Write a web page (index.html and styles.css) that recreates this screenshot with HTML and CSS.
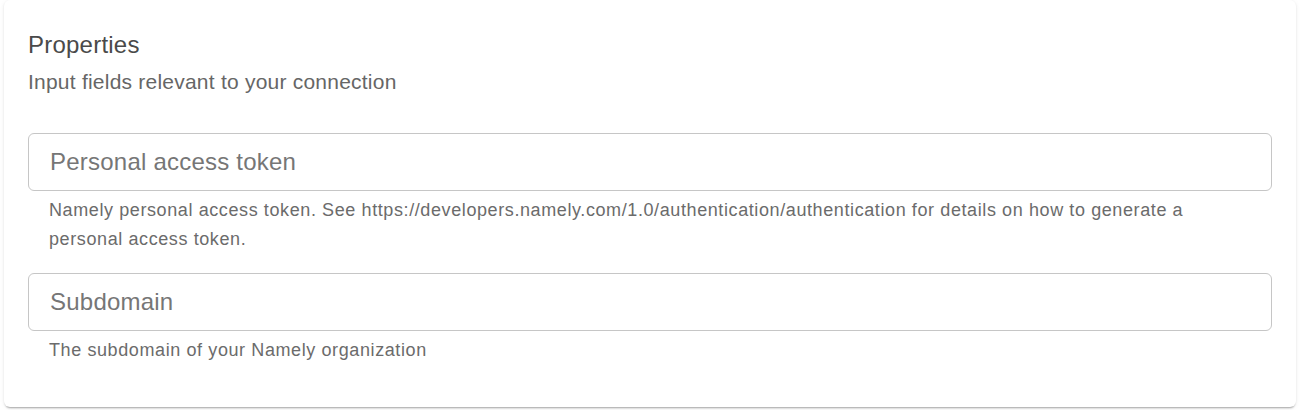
FILE: index.html
```html
<!DOCTYPE html>
<html lang="en">
<head>
<meta charset="utf-8">
<title>Properties</title>
<link rel="stylesheet" href="styles.css">
</head>
<body>
  <section class="card">
    <header class="card-header">
      <h2 class="card-title">Properties</h2>
      <p class="card-subtitle">Input fields relevant to your connection</p>
    </header>
    <div class="fields">
      <div class="field">
        <div class="input-box">
          <input class="input" type="text" placeholder="Personal access token">
        </div>
        <p class="helper">Namely personal access token. See https://developers.namely.com/1.0/authentication/authentication for details on how to generate a personal access token.</p>
      </div>
      <div class="field">
        <div class="input-box">
          <input class="input" type="text" placeholder="Subdomain">
        </div>
        <p class="helper">The subdomain of your Namely organization</p>
      </div>
    </div>
  </section>
</body>
</html>
```

FILE: styles.css
```css
* { box-sizing: border-box; }

html, body {
  margin: 0;
  padding: 0;
  background: #ffffff;
}

body {
  font-family: "Liberation Sans", Arial, Helvetica, sans-serif;
  width: 1300px;
  height: 410px;
  overflow: hidden;
}

.card {
  margin: 0 4px 0 4px;
  width: 1292px;
  height: 407px;
  background: #ffffff;
  border-radius: 6px;
  box-shadow: 0 3px 2px -2px rgba(0,0,0,0.25), 0 1px 2px 0 rgba(0,0,0,0.10), 0 1px 5px 0 rgba(0,0,0,0.06);
  padding: 24px 24px 0 24px;
}

.card-header {
  display: flex;
  flex-direction: column;
}

.card-title {
  margin: 0;
  font-size: 24px;
  font-weight: 400;
  line-height: 42px;
  letter-spacing: 0.00938em;
  color: #4a4a4a;
}

.card-subtitle {
  margin: 1px 0 0 0;
  font-size: 21px;
  line-height: 30px;
  letter-spacing: 0.01071em;
  color: #666666;
}

.fields {
  margin-top: 36px;
  display: flex;
  flex-direction: column;
  gap: 18px;
}

.field {
  display: flex;
  flex-direction: column;
}

.input-box {
  height: 58px;
  border: 1.5px solid #c6c6c6;
  border-radius: 6px;
  display: flex;
  align-items: center;
  padding: 0 21px;
}

.input {
  border: 0;
  outline: none;
  width: 100%;
  background: transparent;
  padding: 0;
  font-family: "Liberation Sans", Arial, Helvetica, sans-serif;
  font-size: 24px;
  letter-spacing: 0.00938em;
  color: #333;
}

.input::placeholder {
  color: #767676;
  opacity: 1;
}

.helper {
  margin: 4.5px 21px 0 21px;
  font-size: 18px;
  line-height: 29.9px;
  letter-spacing: 0.0333em;
  color: #6b6b6b;
}
```
